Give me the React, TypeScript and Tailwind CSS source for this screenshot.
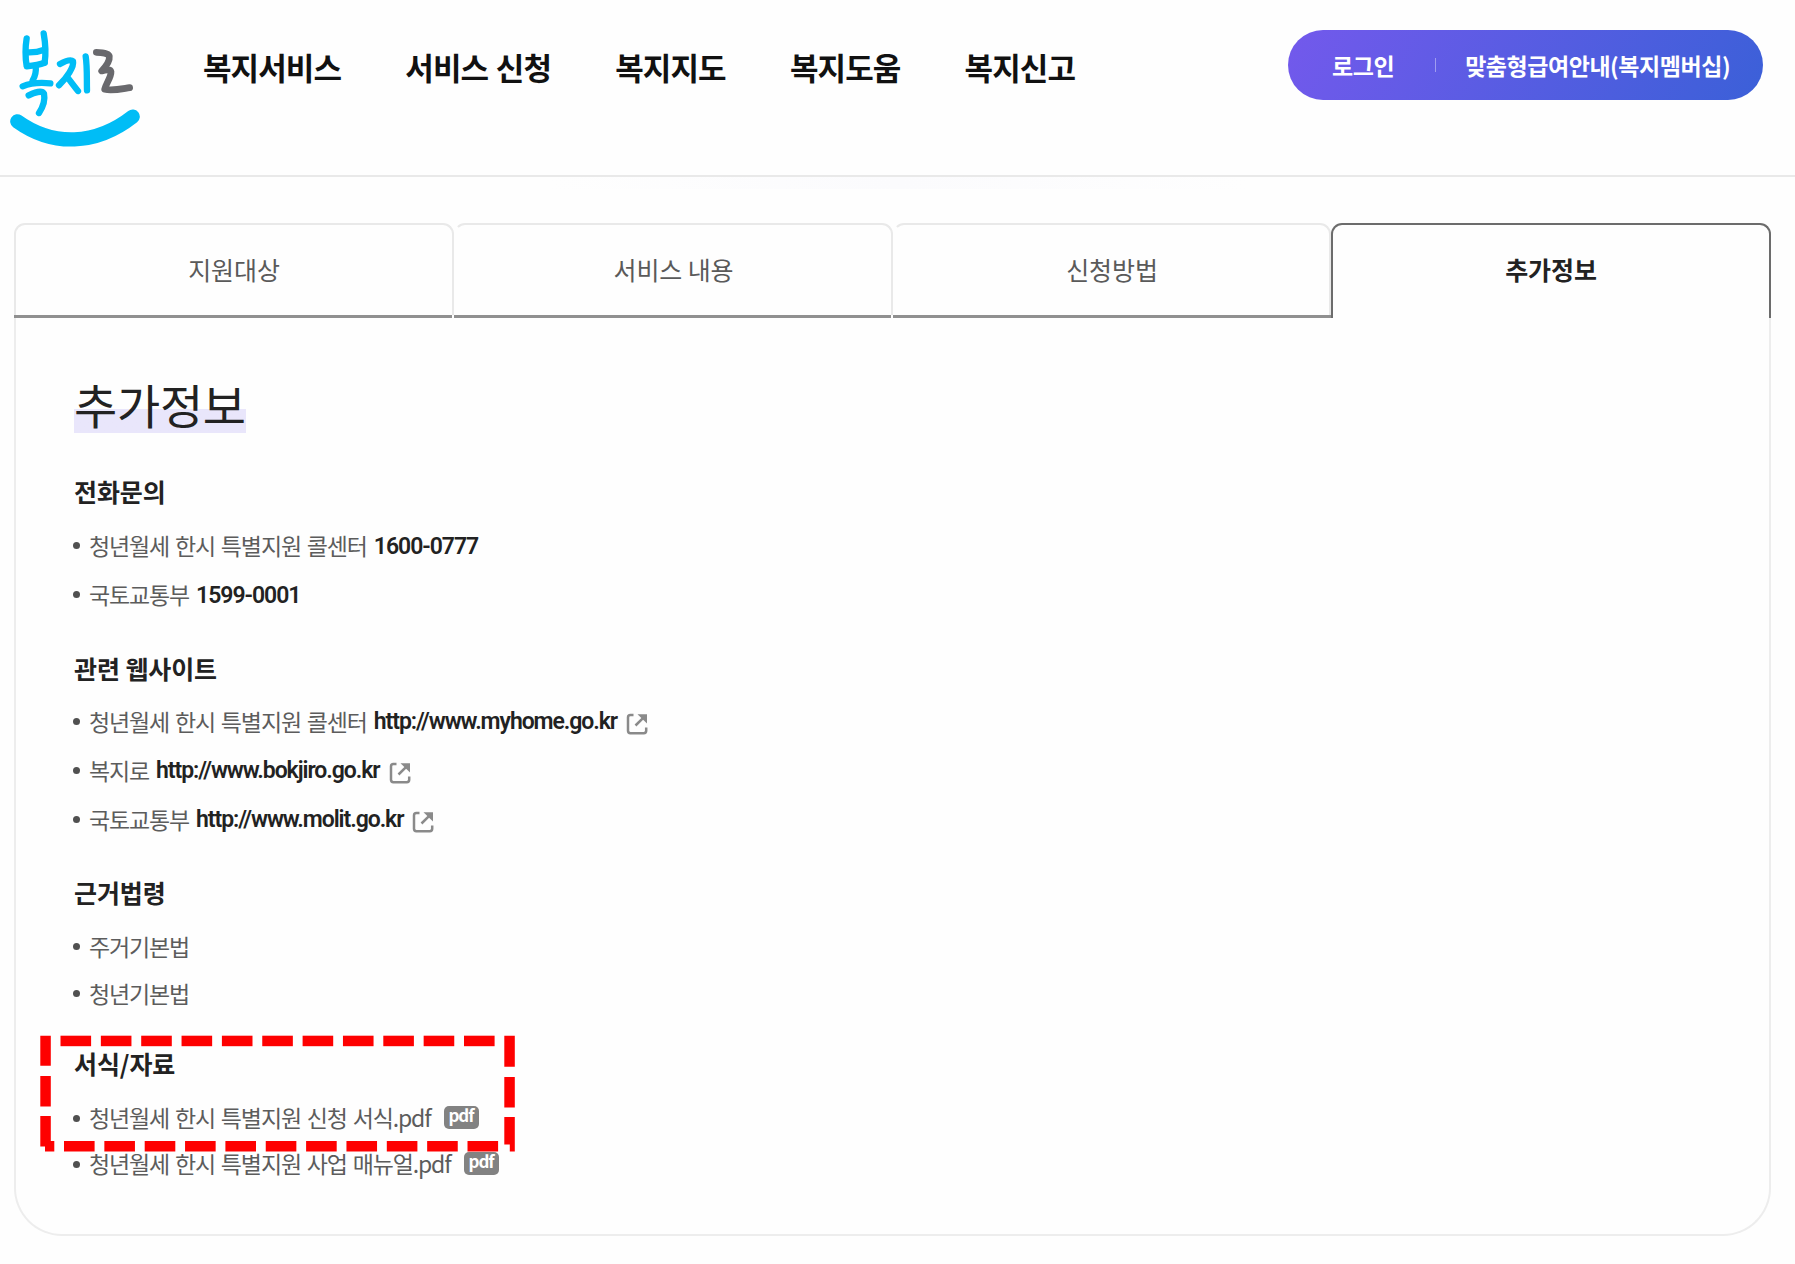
import React from "react";

const navItems = ["복지서비스", "서비스 신청", "복지지도", "복지도움", "복지신고"];
const tabs = ["지원대상", "서비스 내용", "신청방법"];

function Logo() {
  return (
    <svg className="ml-[9px] mt-[28px] h-[120px] w-[134px] shrink-0" viewBox="27 84 402 360" fill="none" strokeLinecap="round" strokeLinejoin="round">
      <g stroke="#00bdf6" strokeWidth="19">
        <path d="M80 115C76 140 75 168 80 199C98 197 118 194 134 188" />
        <path d="M131 100C136 128 138 160 134 188" />
        <path d="M81 157C99 158 117 155 133 149" />
        <path d="M107 197C109 215 105 230 98 241" />
        <path d="M68 259C94 248 123 247 151 250" />
        <path d="M86 286C104 277 126 271 132 281C136 301 127 324 117 339" />
        <path d="M180 192C195 184 212 177 219 184C223 201 200 233 177 256" />
        <path d="M203 233C214 247 223 260 234 273" />
        <path d="M257 169C262 201 260 237 261 271" />
      </g>
      <path stroke="#69696d" strokeWidth="20" d="M289 157C306 157 326 160 328 169C330 184 318 199 305 213C315 210 331 206 333 215C334 232 318 250 314 268C338 273 363 267 389 263" />
      <path stroke="#00bdf6" strokeWidth="43" d="M52 364C158 440 287 437 398 350" />
    </svg>
  );
}

function ExternalIcon() {
  return (
    <svg className="ml-[9px] mt-[6px] h-[22px] w-[22px] shrink-0" viewBox="0 0 22 22" fill="none" stroke="#8a8a8a" strokeWidth="2.5">
      <path d="M7.5 2H4.4Q2 2 2 4.4V17.8Q2 20.2 4.4 20.2H17.8Q20.2 20.2 20.2 17.8V14.5" />
      <path d="M9.5 12.5L18 4.2" />
      <path d="M11.5 1.2H21V10.5Z" fill="#8a8a8a" stroke="none" />
    </svg>
  );
}

function Item({ h, children }: { h: string; children: React.ReactNode }) {
  return (
    <li className={`-ml-px flex items-center whitespace-pre text-[23px] leading-[34px] tracking-[-1.15px] text-[#5c5c5c] [word-spacing:1.9px] ${h}`}>
      <span className="mr-[9px] mt-[2px] h-[7px] w-[7px] shrink-0 rounded-full bg-[#505050]" />
      {children}
    </li>
  );
}

function Strong({ children }: { children: React.ReactNode }) {
  return <b className="ml-[7px] mt-[4px] font-['Roboto'] font-semibold tracking-[-1.02px] text-[#222]">{children}</b>;
}

function Url({ children }: { children: React.ReactNode }) {
  return (
    <>
      <a className="ml-[7px] mt-[2px] font-['Roboto'] font-semibold tracking-[-1.06px] text-[#222]">{children}</a>
      <ExternalIcon />
    </>
  );
}

function Heading({ children }: { children: React.ReactNode }) {
  return <h3 className="h-[36px] text-[25px] font-bold leading-[36px] tracking-[-0.1px] text-[#222]">{children}</h3>;
}

function Pdf() {
  return (
    <span className="ml-[13px] flex h-[23px] w-[35px] shrink-0 items-start justify-center rounded-[5px] bg-[#828282] text-[17px] font-bold leading-[17px] tracking-[-1px] text-white">
      pdf
    </span>
  );
}

const dashesTop = Array.from({ length: 11 }, (_, i) => 20.5 + i * 40.35);
const dashesBottom = Array.from({ length: 11 }, (_, i) => 24 + i * 40.35);

function DashedFrame() {
  return (
    <svg className="absolute left-[40px] top-[1035px] h-[117px] w-[476px]" viewBox="0 0 476 117" fill="#fe0000">
      {dashesTop.map((x) => (
        <rect key={x} x={x} y="0.7" width="30.6" height="10.5" />
      ))}
      {dashesBottom.map((x) => (
        <rect key={x} x={x} y="106" width="30.6" height="10.5" />
      ))}
      <path d="M.3.7h10.5v30H.3zM.3 41h10.5v30.5H.3zM.3 81h10.5v25h3.5v10.5H5v-5H.3z" />
      <path d="M464.3.7h10.5v31h-10.5zM464.3 42h10.5v30.5h-10.5zM464.3 82h10.5v34.5h-5v-7h-5.5z" />
    </svg>
  );
}

export default function App() {
  return (
    <div className="relative h-[1264px] w-[1795px] overflow-hidden bg-[#fefefe] font-['Noto_Sans_CJK_KR',sans-serif]">
      <header className="flex h-[177px] items-start border-b-2 border-[#e9e9e9]">
        <Logo />
        <nav className="ml-[60px] mt-[43px] flex gap-[64.2px] whitespace-nowrap text-[31px] font-bold leading-[47px] tracking-[-0.9px] text-[#111] [word-spacing:1.5px]">
          {navItems.map((n) => (
            <a key={n}>{n}</a>
          ))}
        </nav>
        <div className="ml-auto mr-[32px] mt-[30px] flex h-[70px] w-[475px] items-center rounded-full bg-linear-[120deg,#7359ec,#3b60d8] pl-[44px] text-[23px] font-bold tracking-[-0.45px] text-white">
          <a className="whitespace-nowrap">로그인</a>
          <span className="ml-[41px] h-[14px] w-px bg-white/40" />
          <a className="ml-[29px] whitespace-nowrap">맞춤형급여안내(복지멤버십)</a>
        </div>
      </header>
      <div className="mx-auto h-[12px] w-[700px] bg-linear-to-r from-transparent via-[#fbfbfd] to-transparent" />

      <main className="ml-[14px] mt-[34px] w-[1757px]">
        <div className="flex h-[95px] text-[25px] leading-[36px] tracking-[-0.1px]">
          {tabs.map((t, i) => (
            <div key={t} className={`flex flex-col ${i === 0 ? "w-[440px]" : i === 1 ? "w-[439px]" : "w-[438px]"}`}>
              <div
                className={`flex flex-1 items-center justify-center rounded-t-[11px] border-t-2 border-r-2 border-[#e9e9e9] pb-[2px] text-[#5a5a5a] ${i === 0 ? "border-l-2" : "border-l-2 border-l-transparent"}`}
              >
                {t}
              </div>
              <div className={`h-[3px] bg-[#909090] ${i === 2 ? "" : "mr-[2px]"}`} />
            </div>
          ))}
          <div className="flex flex-1 items-center justify-center rounded-t-[11px] border-2 border-b-0 border-[#6c6c6c] pb-[5px] font-bold text-[#222]">
            추가정보
          </div>
        </div>

        <section className="h-[918px] rounded-b-[48px] border-2 border-t-0 border-[#ededed] pl-[58px]">
          <h2 className="flex pt-[56px]">
            <span className="bg-linear-to-b from-transparent from-[59%] to-[#e9e6fb] to-[59%] text-[47px] font-normal leading-[59px] tracking-[-0.3px] text-[#222]">추가정보</span>
          </h2>

          <div className="mt-[40px]">
            <Heading>전화문의</Heading>
            <ul className="mt-[11px]">
              <Item h="h-[49px]">청년월세 한시 특별지원 콜센터<Strong>1600-0777</Strong></Item>
              <Item h="h-[49px]">국토교통부<Strong>1599-0001</Strong></Item>
            </ul>
          </div>

          <div className="mt-[32px]">
            <Heading>관련 웹사이트</Heading>
            <ul className="mt-[10px]">
              <Item h="h-[49px]">청년월세 한시 특별지원 콜센터<Url>http://www.myhome.go.kr</Url></Item>
              <Item h="h-[49px]">복지로<Url>http://www.bokjiro.go.kr</Url></Item>
              <Item h="h-[49px]">국토교통부<Url>http://www.molit.go.kr</Url></Item>
            </ul>
          </div>

          <div className="mt-[31px]">
            <Heading>근거법령</Heading>
            <ul className="mt-[12px]">
              <Item h="h-[47px]">주거기본법</Item>
              <Item h="h-[47px]">청년기본법</Item>
            </ul>
          </div>

          <div className="mt-[29px]">
            <Heading>서식/자료</Heading>
            <ul className="mt-[13px]">
              <Item h="h-[46px]">청년월세 한시 특별지원 신청 서식.pdf<Pdf /></Item>
              <Item h="h-[46px]">청년월세 한시 특별지원 사업 매뉴얼.pdf<Pdf /></Item>
            </ul>
          </div>
        </section>
      </main>
      <DashedFrame />
    </div>
  );
}
